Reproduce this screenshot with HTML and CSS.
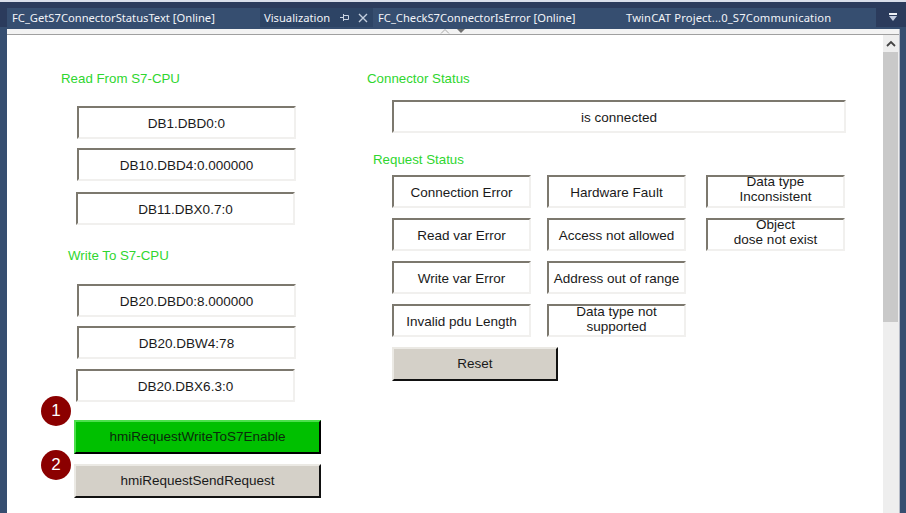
FILE: index.html
```html
<!DOCTYPE html>
<html lang="en">
<head>
<meta charset="utf-8">
<title>Visualization</title>
<link rel="stylesheet" href="styles.css">
</head>
<body>
<div class="top-edge"></div>
<div class="tabstrip">
  <div class="tabs">
    <div class="tab tab-a">FC_GetS7ConnectorStatusText [Online]</div>
    <div class="tab tab-active">Visualization
      <svg class="pin" width="9" height="7" viewBox="0 0 9 7"><path d="M0 3.500h3M3.500 0v7M3.500 1.500h5v4h-5z" fill="none" stroke="#c9d3e2" stroke-width="1"/></svg>
      <svg class="close" width="10" height="10" viewBox="0 0 10 10"><path d="M1 1l8 8M9 1l-8 8" fill="none" stroke="#c3cede" stroke-width="1.400"/></svg>
    </div>
    <div class="tab tab-b">FC_CheckS7ConnectorIsError [Online]</div>
    <div class="tab tab-c">TwinCAT Project...0_S7Communication</div>
  </div>
  <svg class="overflow" width="8" height="8" viewBox="0 0 8 8"><path d="M0 0h8v2H0z" fill="#eef1f6"/><path d="M0 3h8L4 8z" fill="#c3cde0"/></svg>
</div>
<div class="workspace">
  <div class="frame">
    <div class="splitter">
      <svg class="split-up" width="12" height="5" viewBox="0 0 12 5"><path d="M2 4.500L6 .5l4 4" fill="none" stroke="#a8a8a8"/></svg>
      <svg class="split-down" width="12" height="5" viewBox="0 0 12 5"><path d="M2 0h8L6 4z" fill="#6f6f6f"/></svg>
    </div>
    <div class="content">
      <main class="canvas">
        <section class="col-left">
          <h2 class="label label-read">Read From S7-CPU</h2>
          <div class="field f-first">DB1.DBD0:0</div>
          <div class="field f-second">DB10.DBD4:0.000000</div>
          <div class="field f-third">DB11.DBX0.7:0</div>
          <h2 class="label label-write">Write To S7-CPU</h2>
          <div class="field f-w1">DB20.DBD0:8.000000</div>
          <div class="field f-w2">DB20.DBW4:78</div>
          <div class="field f-w3">DB20.DBX6.3:0</div>
          <div class="press press-green">hmiRequestWriteToS7Enable<span class="badge badge-1">1</span></div>
          <div class="press press-grey">hmiRequestSendRequest<span class="badge badge-2">2</span></div>
        </section>
        <section class="col-right">
          <h2 class="label label-conn">Connector Status</h2>
          <div class="field status">is connected</div>
          <h2 class="label label-req">Request Status</h2>
          <div class="errors">
            <div class="field cell">Connection Error</div>
            <div class="field cell">Hardware Fault</div>
            <div class="field cell cell-3">Data type<br>Inconsistent</div>
            <div class="field cell">Read var Error</div>
            <div class="field cell">Access not allowed</div>
            <div class="field cell cell-3">Object<br>dose not exist</div>
            <div class="field cell">Write var Error</div>
            <div class="field cell">Address out of range</div>
            <div class="empty"></div>
            <div class="field cell">Invalid pdu Length</div>
            <div class="field cell cell-two">Data type not<br>supported</div>
          </div>
          <div class="press press-grey reset">Reset</div>
        </section>
      </main>
      <div class="scrollbar">
        <div class="scroll-btn"><svg width="10" height="7" viewBox="0 0 10 7"><path d="M1 6l4-4 4 4" fill="none" stroke="#444" stroke-width="1.800"/></svg></div>
        <div class="scroll-thumb"></div>
      </div>
    </div>
  </div>
</div>
</body>
</html>
```
FILE: styles.css
```css
* { box-sizing: border-box; }
html, body { margin: 0; padding: 0; }
body {
  width: 906px;
  height: 513px;
  overflow: hidden;
  background: #2b3b5c;
  font-family: "Liberation Sans", Arial, sans-serif;
  display: flex;
  flex-direction: column;
}
.top-edge { height: 2px; background: #d9deea; flex: none; }
.tabstrip {
  flex: none;
  height: 25px;
  padding: 6px 0 0 7px;
  display: flex;
  background: #2b3b5c;
}
.tabs {
  width: 869px;
  height: 19px;
  display: flex;
  background: #364e70;
  color: #f2f4f8;
  font-family: "Noto Sans", "Open Sans", sans-serif;
  font-size: 11.200px;
  line-height: 19px;
  white-space: nowrap;
}
.tab { padding-left: 5px; flex: none; }
.tab-a { width: 253px; }
.tab-active {
  width: 113px;
  padding-left: 4px;
  background: #2d4465;
  display: flex;
  align-items: center;
}
.pin { margin-left: 10px; }
.close { margin-left: 9px; }
.tab-b { width: 248px; }
.tab-c { letter-spacing: 0.140px; }
.overflow { margin: 5px 0 0 13px; }
.workspace {
  flex: 1;
  min-height: 0;
  background: #364e70;
  padding: 2px 6px 0 7px;
}
.frame {
  height: 100%;
  background: #fff;
  display: flex;
  flex-direction: column;
  border-right: 1px solid #b5bac6;
}
.splitter {
  flex: none;
  height: 6px;
  background: #f3f3f3;
  border-bottom: 1px solid #a0a0a0;
  display: flex;
  justify-content: center;
}
.split-down { margin-left: 4px; }
.content { flex: 1; min-height: 0; display: flex; }
.canvas {
  flex: 1;
  display: flex;
  color: #1a1a1a;
  font-size: 13.500px;
}
.scrollbar {
  flex: none;
  width: 16px;
  background: #eeeeee;
}
.scroll-btn {
  height: 17px;
  display: flex;
  align-items: center;
  justify-content: center;
}
.scroll-thumb { height: 270px; background: #c9c9c9; width: 15px; }

.label {
  margin: 0;
  font-size: 13.300px;
  font-weight: normal;
  color: #2fd62f;
  line-height: 16px;
}
.field {
  height: 33px;
  padding-top: 2px;
  border-style: solid;
  border-width: 2px;
  border-color: #7c786e #f1f0ee #f1f0ee #7c786e;
  background: #fff;
  display: flex;
  align-items: center;
  justify-content: center;
  text-align: center;
  line-height: 15px;
  white-space: nowrap;
}
.press {
  position: relative;
  height: 34px;
  padding-bottom: 2px;
  border-style: solid;
  border-width: 2px;
  display: flex;
  align-items: center;
  justify-content: center;
}
.press-green {
  background: #00c000;
  border-color: #4ce04c #000 #000 #4ce04c;
  color: #0b2a0b;
}
.press-grey {
  background: #d4d0c8;
  border-color: #ebe9e4 #111 #111 #ebe9e4;
}
.badge {
  position: absolute;
  left: -35px;
  width: 30px;
  height: 30px;
  border-radius: 50%;
  background: #8b0000;
  color: #fff;
  font-size: 17px;
  display: flex;
  align-items: center;
  justify-content: center;
}
.badge-1 { top: -26px; }
.badge-2 { top: -16px; }

.col-left { width: 360px; padding-top: 36px; padding-left: 54px; }
.label-read { margin-bottom: 19px; }
.f-first, .f-second, .f-w1, .f-w2 { margin-left: 16px; width: 219px; }
.f-third, .f-w3 { margin-left: 15px; width: 219px; }
.f-second { margin-top: 9px; }
.f-third { margin-top: 11px; }
.label-write { margin: 23px 0 20px 7px; }
.f-w2 { margin-top: 9px; }
.f-w3 { margin-top: 10px; }
.press-green { margin: 18px 0 0 13px; width: 247px; }
.col-left .press-grey { margin: 10px 0 0 13px; width: 247px; }

.col-right { flex: 1; padding-top: 36px; }
.label-conn { margin-bottom: 13px; }
.status { margin-left: 25px; width: 454px; }
.label-req { margin: 19px 0 7px 6px; }
.errors {
  margin-left: 25px;
  display: grid;
  grid-template-columns: 139px 139px 139px;
  grid-auto-rows: 33px;
  column-gap: 16px;
  row-gap: 10px;
}
.cell-3 { margin-left: 4px; width: 139px; padding-top: 0; padding-bottom: 6px; }
.cell-two { padding-top: 0; padding-bottom: 4px; }
.reset { margin: 10px 0 0 25px; width: 166px; }
```
